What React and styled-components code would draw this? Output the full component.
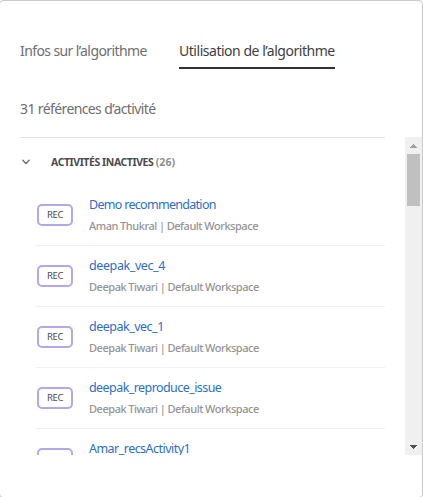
import React from "react";
import styled, { createGlobalStyle } from "styled-components";

const GlobalStyle = createGlobalStyle`
  * { box-sizing: border-box; }
  body { margin: 0; background: #fff; overflow: hidden; }
  #root { font-family: "Noto Sans", "Open Sans", sans-serif; }
`;

const Card = styled.main`
  width: 424px;
  height: 498px;
  margin-left: -1px;
  padding-left: 20px;
  border: 1px solid #cacaca;
  border-radius: 4px;
  background: #fff;
  overflow: hidden;
`;

const Tabs = styled.nav`
  display: flex;
  gap: 32px;
  height: 68px;
  padding-top: 38px;
`;

const Tab = styled.a`
  flex: none;
  width: ${(p) => p.$width}px;
  height: 30px;
  border-bottom: 2px solid ${(p) => (p.$active ? "#323232" : "transparent")};
  color: ${(p) => (p.$active ? "#3e3e3e" : "#6e6e6e")};
  font-size: 14px;
  line-height: 24px;
  letter-spacing: ${(p) => p.$track}px;
  white-space: nowrap;
`;

const Summary = styled.h2`
  height: 20px;
  margin: 30px 0 18px;
  color: #6e6e6e;
  font-size: 14px;
  font-weight: 400;
  line-height: 20px;
  letter-spacing: ${(p) => p.$track}px;
  white-space: nowrap;
`;

const ScrollArea = styled.section`
  display: flex;
  justify-content: space-between;
  height: 318px;
  overflow: hidden;
`;

const Content = styled.div`
  width: 365px;
  border-top: 1px solid #e4e4e4;
`;

const GroupHeader = styled.header`
  display: flex;
  align-items: center;
  height: 47px;
  padding: 1px 0 0 2px;
`;

const GroupTitle = styled.h3`
  margin: 0 0 0 21px;
  color: #4b4b4b;
  font-size: 10.5px;
  font-weight: 700;
  line-height: 16px;
  letter-spacing: ${(p) => p.$track}px;
  white-space: nowrap;
`;

const Count = styled.span`
  color: #8e8e8e;
  letter-spacing: 0.1px;
`;

const List = styled.ul`
  margin: 0;
  padding: 0 0 0 16px;
  list-style: none;
`;

const Row = styled.li`
  display: flex;
  gap: 16px;
  height: 61px;
  padding: 10px 0 0 1px;
  border-bottom: 1px solid #f0f0f0;
`;

const Badge = styled.span`
  display: flex;
  align-items: center;
  justify-content: center;
  width: 36px;
  height: 22px;
  margin-top: 9px;
  border: 2px solid #b4a7ec;
  border-radius: 5px;
  color: #4b4b4b;
  font-size: 9.5px;
  line-height: 16px;
  letter-spacing: -0.4px;
`;

const Details = styled.div`
  white-space: nowrap;
`;

const Name = styled.a`
  display: block;
  color: #2c6dcb;
  font-size: 12.5px;
  line-height: 20px;
  letter-spacing: ${(p) => p.$track}px;
`;

const Meta = styled.div`
  margin-top: 2px;
  color: #949494;
  font-size: 11px;
  font-weight: 500;
  line-height: 18px;
  letter-spacing: -0.45px;
  word-spacing: -0.3px;
`;

const Scrollbar = styled.div`
  display: flex;
  flex-direction: column;
  align-items: center;
  width: 17px;
  background: #f0f0f0;
`;

const ArrowButton = styled.div`
  display: flex;
  align-items: center;
  justify-content: center;
  height: 17px;
  color: ${(p) => (p.$muted ? "#a0a0a0" : "#505050")};
`;

const Thumb = styled.div`
  width: 13px;
  height: 52px;
  margin-bottom: auto;
  background: #c0c0c0;
`;

const Chevron = () => (
  <svg width="8" height="6" viewBox="0 0 8 6" fill="none" stroke="#6e6e6e" strokeWidth="1.4" strokeLinecap="round" strokeLinejoin="round">
    <path d="M0.8 1.2 L4 4.4 L7.2 1.2" />
  </svg>
);

const Arrow = ({ up }) => (
  <svg width="7" height="4" viewBox="0 0 7 4" fill="currentColor" shapeRendering="crispEdges">
    <path d={up ? "M3 0h1v1h1v1h1v1h1v1H0V3h1V2h1V1h1z" : "M0 0h7v1H6v1H5v1H4v1H3V3H2V2H1V1H0z"} />
  </svg>
);

const activities = [
  { name: "Demo recommendation", owner: "Aman Thukral", track: -0.7 },
  { name: "deepak_vec_4", owner: "Deepak Tiwari", track: -0.4 },
  { name: "deepak_vec_1", owner: "Deepak Tiwari", track: -0.5 },
  { name: "deepak_reproduce_issue", owner: "Deepak Tiwari", track: -0.57 },
  { name: "Amar_recsActivity1", owner: "Deepak Tiwari", track: -0.53 },
];

export default function App() {
  return (
    <>
      <GlobalStyle />
      <Card>
        <Tabs>
          <Tab $width={127} $track={-0.6}>Infos sur l’algorithme</Tab>
          <Tab $active $width={156} $track={-0.47}>Utilisation de l’algorithme</Tab>
        </Tabs>
        <Summary $track={-0.61}>31 références d’activité</Summary>
        <ScrollArea>
          <Content>
            <GroupHeader>
              <Chevron />
              <GroupTitle $track={-0.42}>ACTIVITÉS INACTIVES <Count>(26)</Count></GroupTitle>
            </GroupHeader>
            <List>
              {activities.map((a) => (
                <Row key={a.name}>
                  <Badge>REC</Badge>
                  <Details>
                    <Name $track={a.track}>{a.name}</Name>
                    <Meta>{a.owner} | Default Workspace</Meta>
                  </Details>
                </Row>
              ))}
            </List>
          </Content>
          <Scrollbar>
            <ArrowButton $muted><Arrow up /></ArrowButton>
            <Thumb />
            <ArrowButton><Arrow /></ArrowButton>
          </Scrollbar>
        </ScrollArea>
      </Card>
    </>
  );
}
